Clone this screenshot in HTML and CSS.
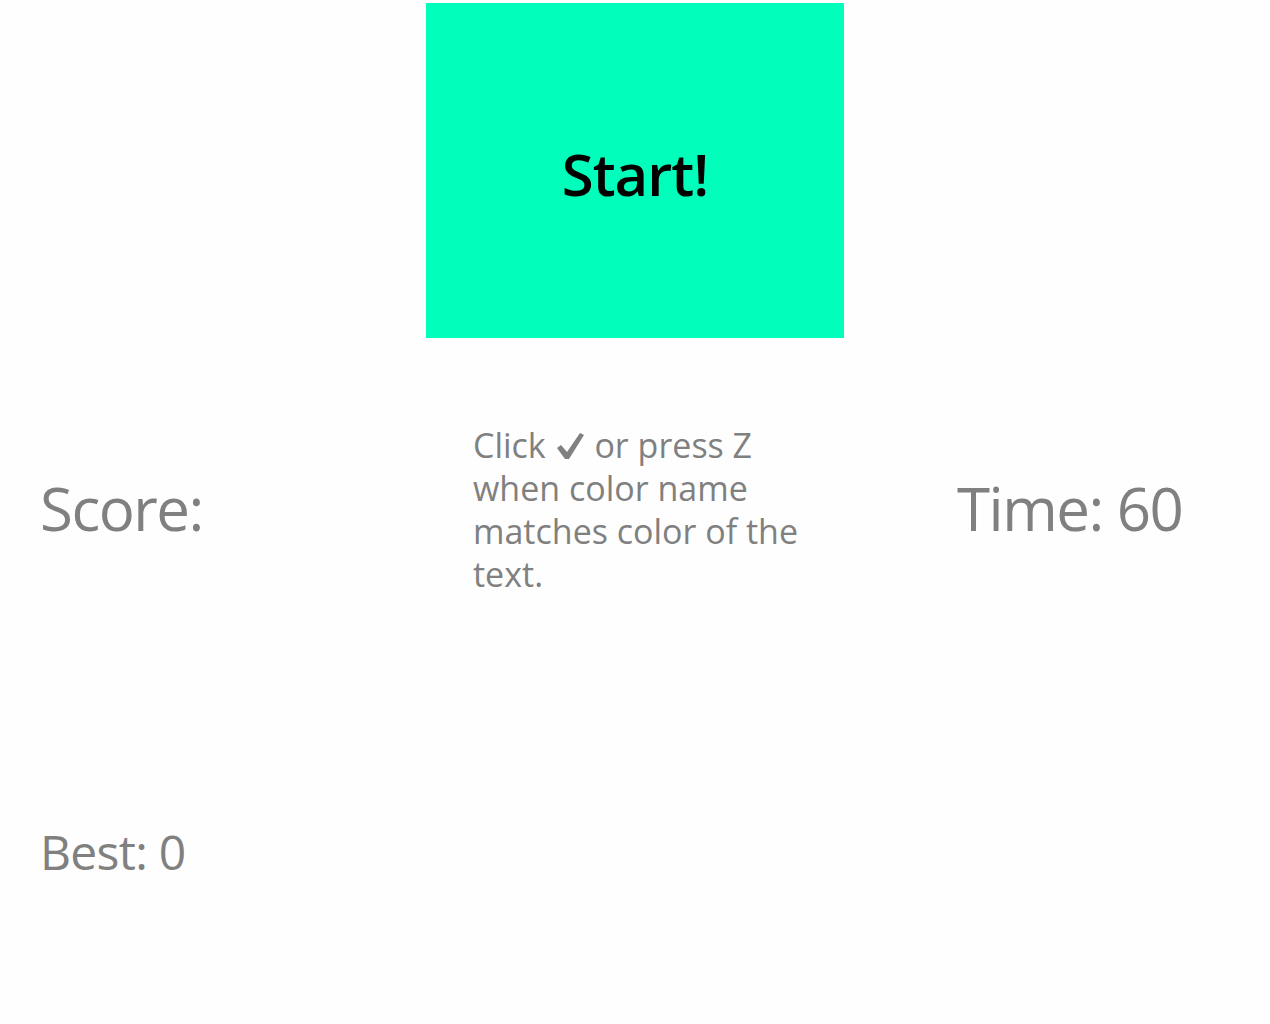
FILE: index.html
```html
<!DOCTYPE html>
<html lang="en">
<head>
<meta charset="utf-8">
<title>Color Match</title>
<link rel="stylesheet" href="styles.css">
</head>
<body>
<main class="game">
  <div class="start">Start!</div>
  <section class="status">
    <div class="score">Score: </div>
    <div class="help">Click <svg class="check" viewBox="0 0 27 26" width="27" height="26" aria-hidden="true"><polygon points="0,15 4,12 10,19 23,0 27,2 12,26 8,26" fill="#808080"/></svg> or press Z when color name matches color of the text.</div>
    <div class="time">Time: 60</div>
  </section>
  <div class="best">Best: 0</div>
</main>
</body>
</html>
```

FILE: styles.css
```css
html, body {
  margin: 0;
  padding: 0;
  background: #fefefe;
}
body {
  font-family: "Open Sans", "Noto Sans", "Liberation Sans", sans-serif;
  color: #808080;
  width: 1270px;
  height: 1024px;
  overflow: hidden;
}
.game {
  display: flex;
  flex-direction: column;
}
.start {
  margin: 3px auto 0;
  width: 418px;
  height: 335px;
  background: #00ffbb;
  color: #000;
  display: flex;
  align-items: center;
  justify-content: center;
  font-weight: 600;
  font-size: 58px;
  letter-spacing: -1px;
  padding-top: 6px;
  box-sizing: border-box;
}
.status {
  display: grid;
  grid-template-columns: 473px 484px 1fr;
  align-items: center;
  margin-top: 86px;
}
.score, .time {
  font-size: 60px;
  letter-spacing: -1.5px;
  line-height: 80px;
  position: relative;
  top: -2px;
}
.score {
  padding-left: 40px;
}
.help {
  font-size: 34px;
  line-height: 43px;
  width: 340px;
}
.check {
  vertical-align: -1px;
  margin: 0 2px;
}
.best {
  margin-top: 224px;
  padding-left: 40px;
  font-size: 48px;
  letter-spacing: -0.7px;
  line-height: 64px;
}
```
